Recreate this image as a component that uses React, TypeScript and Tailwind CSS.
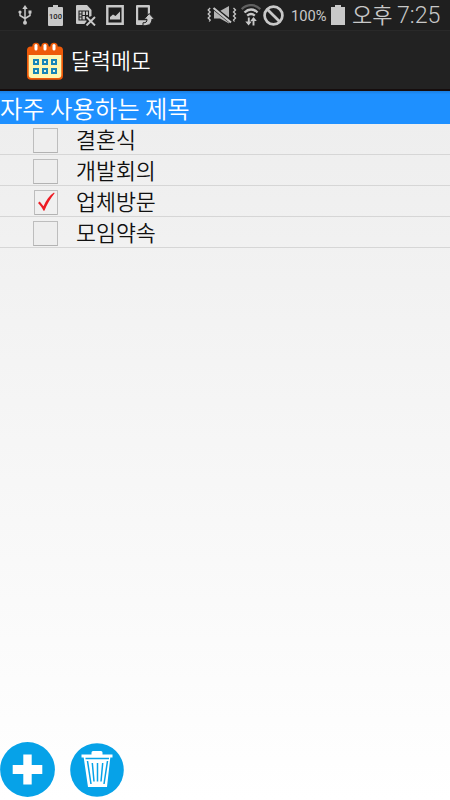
import { useState } from 'react';

interface TitleItem {
  id: number;
  label: string;
  checked: boolean;
}

const TITLES: TitleItem[] = [
  { id: 1, label: '결혼식', checked: false },
  { id: 2, label: '개발회의', checked: false },
  { id: 3, label: '업체방문', checked: true },
  { id: 4, label: '모임약속', checked: false },
];

function UsbIcon() {
  return (
    <svg width="14" height="20" viewBox="0 0 14 20" fill="none" stroke="#c8c8c8" strokeWidth="1.5">
      <path d="M7 3v13M2 7v3.5l5 3M12 7v3.5l-5 3" />
      <path d="M7 0l2.7 4H4.3z" fill="#c8c8c8" stroke="none" />
      <circle cx="2" cy="7" r="1.6" fill="#c8c8c8" stroke="none" />
      <path d="M10.5 5.5h3v3h-3z" fill="#c8c8c8" stroke="none" />
      <circle cx="7" cy="17.7" r="2" fill="#c8c8c8" stroke="none" />
    </svg>
  );
}

function BatteryLevelIcon() {
  return (
    <svg width="15" height="21" viewBox="0 0 15 21">
      <path d="M5 0h5v2h4a1 1 0 0 1 1 1v17a1 1 0 0 1-1 1H1a1 1 0 0 1-1-1V3a1 1 0 0 1 1-1h4z" fill="#c8c8c8" />
      <text x="7.5" y="14.3" textAnchor="middle" fontSize="7.6" fontWeight="500" fill="#222" className="font-['Roboto',sans-serif]">
        100
      </text>
    </svg>
  );
}

function NoSimIcon() {
  return (
    <svg width="20" height="21" viewBox="0 0 20 21" fill="none">
      <path d="M1 0h10l4.5 5v6l-5 2v6H1a1 1 0 0 1-1-1V1a1 1 0 0 1 1-1z" fill="#c8c8c8" />
      <path d="M3 6h9.5v9H3zM6 6v9M9.5 6v9M3 9h3M3 12h3M6 10.5h6" stroke="#222" strokeWidth="1.1" />
      <path d="M10 11.5l9 8.5M19 11.5l-9 8.5" stroke="#1f1f1f" strokeWidth="4.2" />
      <path d="M10.5 12l8.5 8.5M19 12l-8.5 8.5" stroke="#c8c8c8" strokeWidth="1.9" />
    </svg>
  );
}

function ImageIcon() {
  return (
    <svg width="18" height="20" viewBox="0 0 18 20" fill="none">
      <path d="M1.3 1.3h15.4v17.4H1.3z" stroke="#c8c8c8" strokeWidth="2.4" />
      <path d="M4 14.5V12l3-2.5 2.5 1.6L14 6.5v8z" fill="#c8c8c8" />
    </svg>
  );
}

function PhoneShareIcon() {
  return (
    <svg width="19" height="21" viewBox="0 0 19 21" fill="none">
      <path
        fillRule="evenodd"
        d="M1 0h12a1 1 0 0 1 1 1v18a1 1 0 0 1-1 1H1a1 1 0 0 1-1-1V1a1 1 0 0 1 1-1zM2.2 2.5v12.7h9.6V2.5z"
        fill="#c8c8c8"
      />
      <path
        d="M13.2 8.5l5.3 5.8h-2.6c0 4.2-2.7 6.5-8.9 6.5v-3c3 0 4-.8 4-3.500H8z"
        fill="#c8c8c8"
        stroke="#1f1f1f"
        strokeWidth="1"
      />
    </svg>
  );
}

function MuteIcon() {
  return (
    <svg width="30" height="18" viewBox="0 0 30 18" fill="none">
      <path d="M7 5h6l9-5v17.5l-9-5H7z" fill="#b4b4b4" />
      <path d="M5.5 1L25 16.500" stroke="#1f1f1f" strokeWidth="4" />
      <path d="M6.5 2L24 16.500" stroke="#c8c8c8" strokeWidth="2.2" />
      <path d="M3.2 2L1.2 4l2 2-2 2 2 2-2 2 2 2-1 1.5M26.5 2l2 2-2 2 2 2-2 2 2 2-2 2 1 1.5" stroke="#c8c8c8" strokeWidth="1.3" />
    </svg>
  );
}

function WifiIcon() {
  return (
    <svg width="20" height="22" viewBox="0 0 20 22" fill="none">
      <path d="M.7 5.2C6-.2 14-.2 19.3 5.2" stroke="#606060" strokeWidth="2.4" />
      <path d="M3.5 8.500c4-4 9-4 13 0M6.200 11.7c2.5-2.3 5.1-2.3 7.6 0" stroke="#c8c8c8" strokeWidth="2.3" />
      <path d="M7.8 13.5v6M12.500 21.500v-6" stroke="#c8c8c8" strokeWidth="1.9" />
      <path d="M4.300 17.500h6.500l-3.200 4zM9.300 17h6.500l-3.300-4z" fill="#c8c8c8" />
    </svg>
  );
}

function StatusBar() {
  return (
    <div className="flex h-[30px] shrink-0 items-start bg-[#1f1f1f] text-[#c8c8c8]">
      <div className="flex w-[207px] items-start pl-[18px] pt-[5px]">
        <div className="w-[30px]"><UsbIcon /></div>
        <div className="w-7"><BatteryLevelIcon /></div>
        <div className="w-[30px]"><NoSimIcon /></div>
        <div className="w-[30px]"><ImageIcon /></div>
        <PhoneShareIcon />
      </div>
      <div className="flex w-[84px] items-start pt-1">
        <div className="w-[34px] pt-[2px]"><MuteIcon /></div>
        <div className="w-[22px]"><WifiIcon /></div>
        <svg width="21" height="21" viewBox="0 0 20 20" fill="none" stroke="#c8c8c8" strokeWidth="2.6" className="mt-px">
          <circle cx="10" cy="10" r="8.5" />
          <path d="M4 4l12 12" />
        </svg>
      </div>
      <span className="w-10 pt-[6px] font-['Roboto',sans-serif] text-[14.7px] leading-5">100%</span>
      <svg width="14" height="20" viewBox="0 0 14 20" className="mt-[5px]">
        <path d="M4 0h6v2h4v18H0V2h4z" fill="#c8c8c8" />
      </svg>
      <div className="flex items-start whitespace-nowrap pl-[7px]">
        <span className="w-[45px] font-['Noto_Sans_CJK_KR',sans-serif] text-[22px] leading-[27px] font-[350]">오후</span>
        <span className="font-['Roboto',sans-serif] text-[23.2px] leading-[30px] font-light">7:25</span>
      </div>
    </div>
  );
}

function CalendarLogo() {
  return (
    <svg width="38" height="39" viewBox="0 0 38 39">
      <rect x="1" y="4.5" width="36" height="33.3" rx="4" fill="#ee5a08" />
      <circle cx="10" cy="4.5" r="3.7" fill="#ee5a08" />
      <circle cx="19" cy="4.5" r="3.7" fill="#ee5a08" />
      <circle cx="28" cy="4.5" r="3.7" fill="#ee5a08" />
      <path d="M2.7 13h32.6v20a3 3 0 0 1-3 3H5.700a3 3 0 0 1-3-3z" fill="#fff7b0" />
      {[10, 19, 28].map((x) => (
        <g key={x}>
          <rect x={x - 1.5} y="2" width="3" height="6.5" rx="1.5" fill="#fff" />
          <rect x={x - 2} y="18" width="4" height="4" fill="#e4f5d8" stroke="#1685b7" strokeWidth="2" />
          <rect x={x - 2} y="27" width="4" height="4" fill="#e4f5d8" stroke="#1685b7" strokeWidth="2" />
        </g>
      ))}
    </svg>
  );
}

function CheckBox({ checked }: { checked: boolean }) {
  if (!checked) {
    return <div className="h-[25px] w-[25px] border border-[#bdbdbd] border-b-[#b2b2b2] bg-[#eee]" />;
  }
  return (
    <div className="ml-[1px] h-[25px] w-6 rounded-[1px] border border-[#bdbdbd] border-b-[#b2b2b2] bg-[#f0f0f0]">
      <svg width="22" height="23" viewBox="0 0 22 23">
        <path d="M3 12l1.7-1.5 3.8 4.8C11 9.5 14.5 4.5 19 1.5l.6.7C15.5 7.5 12 13 9.4 19.7h-.9C7 16.8 5.3 14.3 3 12z" fill="#ed1c24" />
      </svg>
    </div>
  );
}

export default function App() {
  const [items, setItems] = useState(TITLES);

  const toggle = (id: number) => {
    setItems(prev => prev.map(item => (item.id === id ? { ...item, checked: !item.checked } : item)));
  };

  return (
    <div className="flex h-[800px] w-[450px] flex-col overflow-hidden bg-linear-to-b from-[#ebebeb] to-white font-['Noto_Sans_CJK_KR',sans-serif]">
      <StatusBar />
      <header className="flex h-[61px] shrink-0 items-start border-t border-b-2 border-t-[#292929] border-b-[#160d0d] bg-[#222] pl-[26px] pt-[11px]">
        <CalendarLogo />
        <h1 className="ml-[7px] mt-px text-[21.7px] leading-[34px] font-[350] text-white">달력메모</h1>
      </header>
      <h2 className="h-[33px] shrink-0 whitespace-nowrap bg-[#1e90ff] bg-linear-to-b from-[#1b7fe0] to-[#1e90ff] to-10% text-[24.3px] leading-[33px] font-[350] text-white">
        자주 사용하는 제목
      </h2>

      <ul className="flex flex-col">
        {items.map(item => (
          <li
            key={item.id}
            onClick={() => toggle(item.id)}
            className="flex h-[31px] items-start border-b border-[#d6d6d6] pl-[33px]"
          >
            <div className="w-[43px] pt-[4px]"><CheckBox checked={item.checked} /></div>
            <span className="text-[21.7px] leading-[29px] font-[350] text-[#111]">{item.label}</span>
          </li>
        ))}
      </ul>

      <div className="mt-auto flex items-end gap-[15px] pb-[3px]">
        <button aria-label="추가">
          <svg width="55" height="55" viewBox="0 0 55 55" className="block">
            <circle cx="27.5" cy="27.5" r="27.4" fill="#06a2e8" />
            <path d="M23.3 12.5h8.4V23h10.6v9H31.7v10.5h-8.400V32H12.700v-9h10.600z" fill="#fff" />
          </svg>
        </button>
        <button aria-label="삭제">
          <svg width="54" height="54" viewBox="0 0 54 54" className="block">
            <circle cx="27" cy="27" r="26.8" fill="#06a2e8" />
            <path d="M11.5 11.500h10V9.500q0-1.500 1.500-1.500h8q1.500 0 1.500 1.500v2h10v3h-2.200L37 44H18L13.700 14.500h-2.200z" fill="#fff" />
            <path d="M17.5 18l3.500 23M22.300 20l1.700 18.500M27.500 20v18.500M32.700 20L31 38.500M37.500 18L34 41M15.500 15.500h23.500" stroke="#06a2e8" strokeWidth="1.5" fill="none" />
          </svg>
        </button>
      </div>
    </div>
  );
}
